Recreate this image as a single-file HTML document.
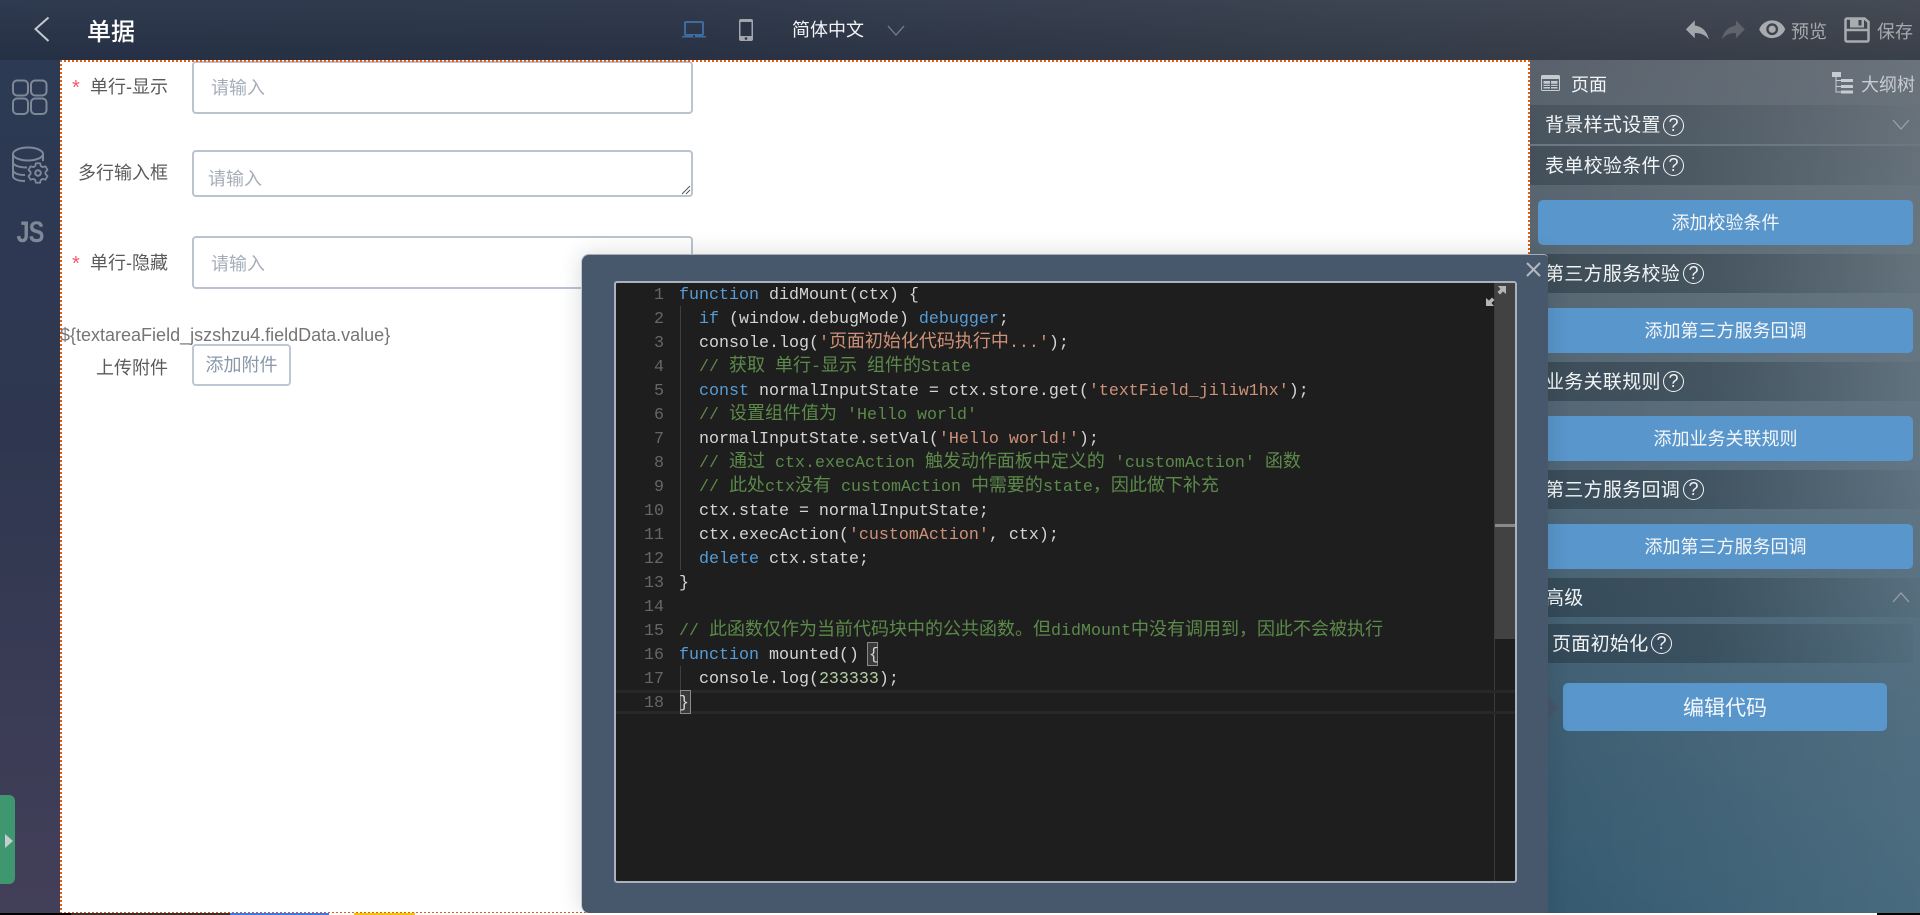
<!DOCTYPE html>
<html lang="zh"><head><meta charset="utf-8"><title>单据</title>
<style>
*{box-sizing:border-box}
html,body{margin:0;padding:0;width:1920px;height:915px;overflow:hidden;background:#fff}
body{position:relative;font-family:"Liberation Sans","Noto Sans CJK SC",sans-serif}
.a{position:absolute}
svg{position:absolute;display:block}
#top{left:0;top:0;width:1920px;height:60px;background:linear-gradient(90deg,#28344a,#2b3548 35%,#3f454f 100%)}
#top:after{content:"";position:absolute;inset:0;background:linear-gradient(180deg,rgba(255,255,255,.03),rgba(0,0,0,.08))}
.t{position:absolute;white-space:nowrap;line-height:28px;z-index:2}
#side{left:0;top:60px;width:60px;height:853px;background:linear-gradient(180deg,#2c3a54,#2f3750 45%,#433f59 100%)}
#canvas{left:60px;top:60px;width:1470px;height:853px;background:#fff;overflow:hidden}
.dh{position:absolute;background:repeating-linear-gradient(90deg,#f0570a 0 2px,transparent 2px 4px)}
.dv{position:absolute;background:repeating-linear-gradient(180deg,#f0570a 0 2px,transparent 2px 4px)}
.lab{position:absolute;left:0;width:168px;text-align:right;font-size:18px;line-height:28px;color:#5a5a5a;white-space:nowrap}
.star{position:absolute;left:72px;color:#f5586a;font-size:20px;line-height:28px}
.ipt{position:absolute;left:192px;width:501px;border:2px solid #bcc3d0;border-radius:4px;background:#fff}
.ph{position:absolute;font-size:18px;line-height:28px;color:#a5adba;white-space:nowrap}
#panel{left:1530px;top:60px;width:390px;height:853px;background:linear-gradient(90deg,rgba(255,255,255,0),rgba(255,255,255,.1)),linear-gradient(180deg,#59626c 0,#576772 25%,#4f6676 50%,#3e5e72 75%,#345a70 100%)}
.row{position:absolute;left:1530px;width:390px;height:39px;background:linear-gradient(90deg,rgba(36,50,60,.5),rgba(36,50,60,.42) 45%,rgba(36,50,60,.05) 100%)}
.rt{position:absolute;white-space:nowrap;color:#f2f4f5;font-size:19px;letter-spacing:.3px;line-height:28px}
.q{position:absolute;width:21px;height:21px;border:1.5px solid #f2f4f5;border-radius:50%;color:#f2f4f5;font-size:18px;line-height:18px;text-align:center}
.btn{position:absolute;left:1538px;width:375px;height:45px;background:#5996cb;border-radius:5px;color:#f4f7fa;font-size:18px;line-height:47px;text-align:center;white-space:nowrap}
#modal{left:581px;top:254px;width:967px;height:659px;background:#47576c;border-radius:8px 4px 0 8px;box-shadow:0 0 22px rgba(20,30,40,.16);border-left:1px solid #c4c9cf;border-top:1px solid #a9afb8}
#arrow{left:1548px;top:697px;width:0;height:0;border-left:11px solid #47576c;border-top:11px solid transparent;border-bottom:11px solid transparent}
#ed{left:614px;top:281px;width:903px;height:602px;background:#1e1e1e;border:2px solid #a9b2bd;border-radius:3px;overflow:hidden}
.ln{position:absolute;left:0;width:1000px;height:24px;line-height:24px;white-space:pre;font-family:"Liberation Mono","Noto Sans CJK SC",monospace;font-size:16.67px;color:#d4d4d4}
.n{position:absolute;left:0;top:2px;width:48px;text-align:right;color:#666}
.cd{position:absolute;left:63px;top:2px}
.k{color:#569cd6}.s{color:#ce9178}.g{color:#5c8a4a}.m{color:#b5cea8}
.c{font-family:"Noto Sans CJK SC",sans-serif;font-size:18px;line-height:0}
</style></head><body>

<div id="top" class="a"></div>
<svg style="left:30px;top:14px;z-index:2" width="24" height="30" viewBox="0 0 24 30"><path d="M18.500 3.500L5.500 15l13 12" fill="none" stroke="#c4c8ce" stroke-width="2"/></svg>
<div class="t" style="left:87px;top:19px;font-size:24px;color:#fff;font-weight:500">单据</div>
<svg style="left:682px;top:20px;z-index:2" width="24" height="19" viewBox="0 0 24 19"><rect x="3" y="2" width="18" height="13" rx="1" fill="none" stroke="#3f6c9e" stroke-width="2"/><path d="M0 16h24v1.500H0z" fill="#3f6c9e"/><rect x="11" y="15.500" width="2" height="1.500" fill="#1f2d40"/></svg>
<svg style="left:739px;top:19px;z-index:2" width="14" height="22" viewBox="0 0 14 22"><rect width="14" height="22" rx="2" fill="#a2a6ac"/><rect x="1.500" y="3" width="11" height="14" fill="#2a3446"/><circle cx="7" cy="19.500" r="1.300" fill="#2a3446"/></svg>
<div class="t" style="left:792px;top:16px;font-size:18px;color:#f4f5f7">简体中文</div>
<svg style="left:887px;top:25px;z-index:2" width="18" height="11" viewBox="0 0 18 11"><path d="M1 1l8 9 8-9" fill="none" stroke="#6b7585" stroke-width="1.500"/></svg>

<svg style="left:1682px;top:14px;z-index:2" width="30.700" height="30.700" viewBox="0 0 24 24"><path fill="#a3a7ac" d="M10 9V5l-7 7 7 7v-4.100c5 0 8.500 1.600 11 5.100-1-5-4-10-11-11z"/></svg>
<svg style="left:1718px;top:14px;z-index:2;transform:scaleX(-1)" width="30.700" height="30.700" viewBox="0 0 24 24"><path fill="#5f646b" d="M10 9V5l-7 7 7 7v-4.100c5 0 8.500 1.600 11 5.100-1-5-4-10-11-11z"/></svg>
<svg style="left:1758px;top:15.300px;z-index:2" width="28.400" height="28.400" viewBox="0 0 24 24"><path fill="#a8abaf" d="M12 4.500C7 4.500 2.730 7.610 1 12c1.730 4.390 6 7.500 11 7.500s9.270-3.110 11-7.500c-1.730-4.390-6-7.500-11-7.500zM12 17c-2.760 0-5-2.240-5-5s2.240-5 5-5 5 2.240 5 5-2.240 5-5 5zm0-8c-1.660 0-3 1.340-3 3s1.340 3 3 3 3-1.340 3-3-1.340-3-3-3z"/></svg>
<div class="t" style="left:1791px;top:18px;font-size:18px;color:#a6a9ad">预览</div>
<svg style="left:1844px;top:17px;z-index:2" width="26" height="26" viewBox="0 0 26 26"><path d="M3 1.500h17.500L24.500 5v18a1.500 1.500 0 0 1-1.500 1.500H3A1.500 1.500 0 0 1 1.500 23V3A1.500 1.500 0 0 1 3 1.500z" fill="none" stroke="#a8abaf" stroke-width="2.500"/><path d="M6 1.500h14v9H6z" fill="#a8abaf"/><rect x="14.500" y="3" width="3" height="5.500" fill="#3f454f"/><path d="M1.500 13h23" stroke="#a8abaf" stroke-width="2.500"/></svg>
<div class="t" style="left:1877px;top:18px;font-size:18px;color:#a6a9ad">保存</div>

<div id="side" class="a"></div>
<svg style="left:10px;top:78px" width="40" height="38" viewBox="0 0 40 38" fill="none" stroke="#7f8897" stroke-width="2"><rect x="3" y="2.500" width="15" height="15" rx="4"/><rect x="21" y="2.500" width="15.500" height="15" rx="4"/><rect x="3" y="20.500" width="15" height="15.500" rx="4"/><rect x="21" y="20.500" width="15.500" height="15.500" rx="4"/></svg>
<svg style="left:10px;top:145px" width="40" height="40" viewBox="0 0 40 40" fill="none" stroke="#7f8897" stroke-width="2"><ellipse cx="18" cy="9" rx="15" ry="6.500"/><path d="M3 9v22c0 3 5 5 12 5"/><path d="M33 9v7"/><path d="M3 17c0 3 5 5.500 14 5.500"/><path d="M3 25c0 3 5 5 12 5"/><circle cx="28" cy="28" r="2.800"/><path stroke-width="1.800" stroke-linejoin="round" d="M30.810 21.050L30.080 18.220L25.920 18.220L25.190 21.050L23.380 22.090L20.570 21.310L18.490 24.910L20.570 26.960L20.570 29.040L18.490 31.090L20.570 34.690L23.380 33.910L25.190 34.950L25.920 37.780L30.080 37.780L30.810 34.950L32.620 33.910L35.430 34.690L37.510 31.090L35.430 29.040L35.430 26.960L37.510 24.910L35.430 21.310L32.620 22.090Z"/></svg>
<div class="a" style="left:10px;top:216px;width:40px;height:34px;font-size:30px;line-height:34px;font-weight:bold;color:#808897;text-align:center;transform:scaleX(.78);letter-spacing:-1px">JS</div>
<div class="a" style="left:0;top:795px;width:15px;height:89px;background:#3f976f;border-radius:0 6px 6px 0"></div>
<div class="a" style="left:4.500px;top:834px;width:0;height:0;border-left:8.500px solid #c6cdd2;border-top:7px solid transparent;border-bottom:7px solid transparent"></div>

<div id="canvas" class="a"></div>
<div class="a" style="left:0;top:60px;width:1530px;height:853px;overflow:hidden">
  <div class="ipt" style="top:1px;height:53px"></div>
  <div class="ipt" style="top:90px;height:47px"></div>
  <div class="ipt" style="top:176px;height:53px"></div>
  <svg style="left:681px;top:125px" width="10" height="10" viewBox="0 0 10 10"><path d="M1 9l8-8M5 9l4-4" stroke="#555" stroke-width="1"/></svg>
  <div class="star" style="top:14px">*</div>
  <div class="lab" style="top:13px">单行-显示</div>
  <div class="ph" style="left:211px;top:14px">请输入</div>
  <div class="lab" style="top:99px">多行输入框</div>
  <div class="ph" style="left:208px;top:105px">请输入</div>
  <div class="star" style="top:190px">*</div>
  <div class="lab" style="top:189px">单行-隐藏</div>
  <div class="ph" style="left:211px;top:190px">请输入</div>
  <div class="a" style="left:60px;top:261px;font-size:18px;line-height:28px;color:#757575;white-space:nowrap">${textareaField_jszshzu4.fieldData.value}</div>
  <div class="lab" style="top:294px">上传附件</div>
  <div class="a" style="left:192px;top:284px;width:99px;height:42px;border:2px solid #bcc8d5;border-radius:4px;font-size:18px;line-height:39px;color:#8997a9;text-align:center;white-space:nowrap">添加附件</div>
  <div class="dh" style="left:60px;top:0;width:1470px;height:2px"></div>
  <div class="dv" style="left:60px;top:0;width:2px;height:853px"></div>
  <div class="dv" style="left:1528px;top:0;width:2px;height:853px"></div>
  <div class="dh" style="left:60px;top:852px;width:1470px;height:1px"></div>
</div>

<div id="panel" class="a"></div>
<svg style="left:1541px;top:75px" width="20" height="17" viewBox="0 0 20 17"><rect x=".5" y=".5" width="18" height="15" rx="1" fill="none" stroke="#c6cbd0"/><path d="M1 1h17v3H1z" fill="#c6cbd0"/><path d="M2.500 6h14v7.500h-14z" fill="#c6cbd0"/><path d="M2.500 9.200h14M2.500 11.500h14M9.500 6v7.500" stroke="#4f5a64" stroke-width="1"/></svg>
<div class="t" style="left:1571px;top:71px;font-size:18px;color:#f4f5f6">页面</div>
<svg style="left:1831px;top:71px" width="23" height="24" viewBox="0 0 23 24"><path d="M1 1h9v5H1zM10 8h12v3H10zM10 14h12v3H10zM10 19.500h12v3H10z" fill="#c8cbcf"/><path d="M5 6v15h5M5 9.500h5M5 15.500h5" fill="none" stroke="#c8cbcf" stroke-width="1"/></svg>
<div class="t" style="left:1861px;top:71px;font-size:18px;color:#c8cbcf">大纲树</div>

<div class="row" style="top:105px;background:linear-gradient(90deg,rgba(36,50,60,.3),rgba(36,50,60,.25) 40%,rgba(36,50,60,.02))"></div>
<div class="a" style="left:1530px;top:144px;width:390px;height:2px;background:#6c7781"></div>
<div class="rt" style="left:1545px;top:112px">背景样式设置</div><div class="q" style="left:1663px;top:115px">?</div>
<svg style="left:1892px;top:119px" width="18" height="12" viewBox="0 0 18 12"><path d="M1 1l8 9 8-9" fill="none" stroke="#98a0a8" stroke-width="1.300"/></svg>

<div class="row" style="top:146px;background:linear-gradient(90deg,rgba(36,50,60,.4),rgba(36,50,60,.32) 40%,rgba(36,50,60,.05))"></div>
<div class="rt" style="left:1545px;top:153px">表单校验条件</div><div class="q" style="left:1663px;top:155px">?</div>
<div class="btn" style="top:200px">添加校验条件</div>

<div class="row" style="top:254px"></div>
<div class="rt" style="left:1545px;top:261px">第三方服务校验</div><div class="q" style="left:1683px;top:263px">?</div>
<div class="btn" style="top:308px">添加第三方服务回调</div>

<div class="row" style="top:362px"></div>
<div class="rt" style="left:1545px;top:369px">业务关联规则</div><div class="q" style="left:1663px;top:371px">?</div>
<div class="btn" style="top:416px">添加业务关联规则</div>

<div class="row" style="top:470px"></div>
<div class="rt" style="left:1545px;top:477px">第三方服务回调</div><div class="q" style="left:1683px;top:479px">?</div>
<div class="btn" style="top:524px">添加第三方服务回调</div>

<div class="row" style="top:578px"></div>
<div class="rt" style="left:1545px;top:585px">高级</div>
<svg style="left:1892px;top:591px" width="18" height="12" viewBox="0 0 18 12"><path d="M1 11l8-9 8 9" fill="none" stroke="#98a0a8" stroke-width="1.300"/></svg>

<div class="row" style="top:624px;width:383px"></div>
<div class="rt" style="left:1552px;top:631px">页面初始化</div><div class="q" style="left:1651px;top:633px">?</div>
<div class="btn" style="left:1563px;top:683px;width:324px;height:48px;line-height:51px;font-size:21px">编辑代码</div>

<div id="arrow" class="a"></div>
<div id="modal" class="a"></div>
<svg style="left:1526px;top:262px" width="15" height="15" viewBox="0 0 15 15"><path d="M1 1l13 13M14 1L1 14" stroke="#b3b9c2" stroke-width="2"/></svg>

<div id="ed" class="a">
  <div class="a" style="left:878px;top:0;width:21px;height:356px;background:#424242"></div>
  <div class="a" style="left:878px;top:0;width:1px;height:600px;background:#3c3c3c"></div>
  <div class="a" style="left:879px;top:241px;width:21px;height:3px;background:#8a8a8a"></div>
  <div class="a" style="left:0;top:407px;width:900px;height:24px;border-top:3px solid #282828;border-bottom:3px solid #282828"></div>
  <div class="a" style="left:64px;top:23px;width:1px;height:264px;background:#404040"></div>
  <div class="a" style="left:64px;top:383px;width:1px;height:24px;background:#404040"></div>
  <div class="a" style="left:251px;top:359px;width:11px;height:24px;border:1px solid #8a8a8a;background:#3a3a3a"></div>
  <div class="a" style="left:64px;top:407px;width:11px;height:24px;border:1px solid #8a8a8a;background:#3a3a3a"></div>
  <div class="ln" style="top:-1px"><span class="n">1</span><span class="cd"><span class="k">function</span> didMount(ctx) {</span></div>
  <div class="ln" style="top:23px"><span class="n">2</span><span class="cd">  <span class="k">if</span> (window.debugMode) <span class="k">debugger</span>;</span></div>
  <div class="ln" style="top:47px"><span class="n">3</span><span class="cd">  console.log(<span class="s">'<span class="c">页面初始化代码执行中</span>...'</span>);</span></div>
  <div class="ln" style="top:71px"><span class="n">4</span><span class="cd">  <span class="g">// <span class="c">获取</span> <span class="c">单行</span>-<span class="c">显示</span> <span class="c">组件的</span>State</span></span></div>
  <div class="ln" style="top:95px"><span class="n">5</span><span class="cd">  <span class="k">const</span> normalInputState = ctx.store.get(<span class="s">'textField_jiliw1hx'</span>);</span></div>
  <div class="ln" style="top:119px"><span class="n">6</span><span class="cd">  <span class="g">// <span class="c">设置组件值为</span> 'Hello world'</span></span></div>
  <div class="ln" style="top:143px"><span class="n">7</span><span class="cd">  normalInputState.setVal(<span class="s">'Hello world!'</span>);</span></div>
  <div class="ln" style="top:167px"><span class="n">8</span><span class="cd">  <span class="g">// <span class="c">通过</span> ctx.execAction <span class="c">触发动作面板中定义的</span> 'customAction' <span class="c">函数</span></span></span></div>
  <div class="ln" style="top:191px"><span class="n">9</span><span class="cd">  <span class="g">// <span class="c">此处</span>ctx<span class="c">没有</span> customAction <span class="c">中需要的</span>state<span class="c">，因此做下补充</span></span></span></div>
  <div class="ln" style="top:215px"><span class="n">10</span><span class="cd">  ctx.state = normalInputState;</span></div>
  <div class="ln" style="top:239px"><span class="n">11</span><span class="cd">  ctx.execAction(<span class="s">'customAction'</span>, ctx);</span></div>
  <div class="ln" style="top:263px"><span class="n">12</span><span class="cd">  <span class="k">delete</span> ctx.state;</span></div>
  <div class="ln" style="top:287px"><span class="n">13</span><span class="cd">}</span></div>
  <div class="ln" style="top:311px"><span class="n">14</span></div>
  <div class="ln" style="top:335px"><span class="n">15</span><span class="cd"><span class="g">// <span class="c">此函数仅作为当前代码块中的公共函数。但</span>didMount<span class="c">中没有调用到，因此不会被执行</span></span></span></div>
  <div class="ln" style="top:359px"><span class="n">16</span><span class="cd"><span class="k">function</span> mounted() {</span></div>
  <div class="ln" style="top:383px"><span class="n">17</span><span class="cd">  console.log(<span class="m">233333</span>);</span></div>
  <div class="ln" style="top:407px"><span class="n">18</span><span class="cd">}</span></div>
  <svg style="left:868px;top:2px" width="24" height="22" viewBox="0 0 24 22"><path d="M14 1h8v8l-3-2.500-3 3-2.500-2.500 3-3zM10 21H2v-8l3 2.500 3-3 2.500 2.500-3 3z" fill="#b5b5b5"/></svg>
</div>

<div class="a" style="left:0;top:913px;width:1920px;height:2px;background:#fff"></div>
<div class="a" style="left:0;top:913px;width:71px;height:2px;background:#000"></div>
<div class="a" style="left:71px;top:913px;width:159px;height:2px;background:#333"></div>
<div class="a" style="left:230px;top:913px;width:99px;height:2px;background:#2e7cf6"></div>
<div class="a" style="left:354px;top:913px;width:61px;height:2px;background:#f5c400"></div>
<div class="a" style="left:1877px;top:913px;width:43px;height:2px;background:#000"></div>
</body></html>
